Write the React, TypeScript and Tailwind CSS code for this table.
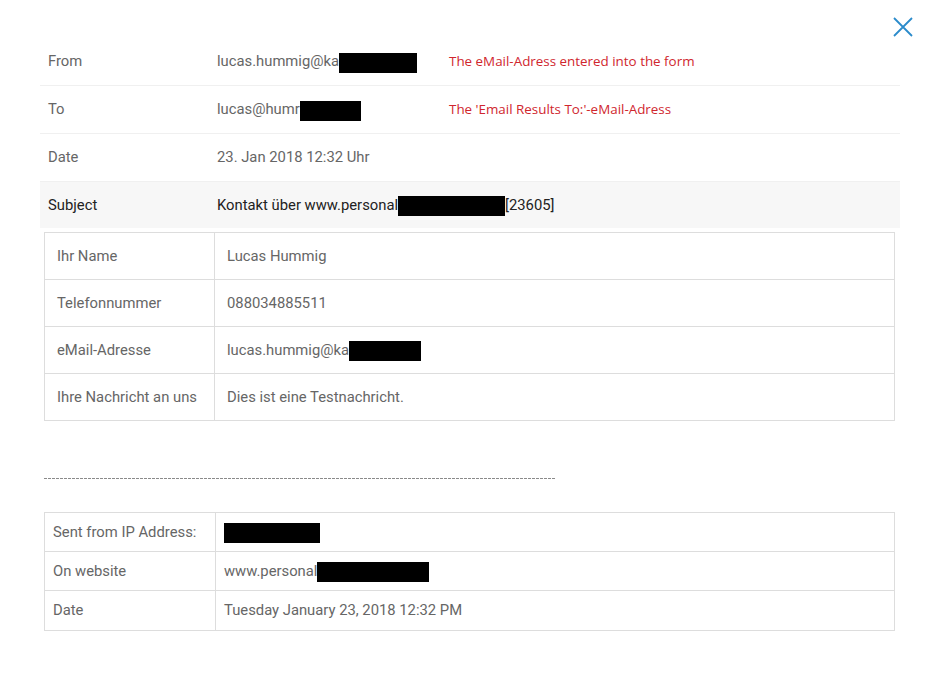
import React from 'react';

interface Row {
  label: string;
  value: string;
  redact?: number;
}

const headerRows = [
  { label: 'From', value: 'lucas.hummig@ka', redact: 78, note: 'The eMail-Adress entered into the form' },
  { label: 'To', value: 'lucas@humr', redact: 61, note: "The 'Email Results To:'-eMail-Adress" },
  { label: 'Date', value: '23. Jan 2018 12:32 Uhr' },
];

const formRows: Row[] = [
  { label: 'Ihr Name', value: 'Lucas Hummig' },
  { label: 'Telefonnummer', value: '088034885511' },
  { label: 'eMail-Adresse', value: 'lucas.hummig@ka', redact: 72 },
  { label: 'Ihre Nachricht an uns', value: 'Dies ist eine Testnachricht.' },
];

const metaRows: Row[] = [
  { label: 'Sent from IP Address:', value: '', redact: 96 },
  { label: 'On website', value: 'www.personal', redact: 112 },
  { label: 'Date', value: 'Tuesday January 23, 2018 12:32 PM' },
];

// black box used to hide personal data in the screenshot
const Redacted = ({ width }: { width: number }) => (
  <span className="inline-block h-[20px] bg-black align-middle" style={{ width }} />
);

export default function App() {
  return (
    <div className="relative min-h-[674px] w-[941px] bg-white font-['Roboto',sans-serif] text-[14.8px]">
      <button className="absolute right-[28px] top-[17px] text-[#2b8bcb]">
        <svg width="20" height="20" viewBox="0 0 20 20" fill="none" stroke="currentColor" strokeWidth="1.8">
          <path d="M1 1 L19 19 M19 1 L1 19" />
        </svg>
      </button>

      <div className="ml-[40px] w-[860px] pt-[38px]">
        {headerRows.map((r) => (
          <div key={r.label} className="flex h-[48px] items-center border-b border-[#f0f0f0] text-[#666]">
            <div className="w-[177px] pl-[8px]">{r.label}</div>
            <div className="w-[232px] whitespace-nowrap">
              {r.value}
              {r.redact && <Redacted width={r.redact} />}
            </div>
            {r.note && (
              <div className="font-['Open_Sans',sans-serif] text-[13.4px] text-[#d0262e]">{r.note}</div>
            )}
          </div>
        ))}
        <div className="flex h-[46px] items-center bg-[#f7f7f7] text-[#222]">
          <div className="w-[177px] pl-[8px]">Subject</div>
          <div className="whitespace-nowrap">
            Kontakt über www.personal
            <Redacted width={107} />
            [23605]
          </div>
        </div>
      </div>

      <div className="ml-[44px] mt-[4px] w-[851px] border border-b-0 border-[#ddd] text-[#666]">
        {formRows.map((r) => (
          <div key={r.label} className="flex h-[47px] items-center border-b border-[#ddd]">
            <div className="flex h-full w-[170px] items-center border-r border-[#ddd] pl-[12px]">{r.label}</div>
            <div className="pl-[12px] whitespace-nowrap">
              {r.value}
              {r.redact && <Redacted width={r.redact} />}
            </div>
          </div>
        ))}
      </div>

      <div className="ml-[44px] mt-[57px] h-[1px] w-[512px] bg-[repeating-linear-gradient(90deg,#8a8a8a_0_3px,transparent_3px_4px)]" />

      <div className="mb-[43px] ml-[44px] mt-[33px] w-[851px] border border-b-0 border-[#ddd] text-[#666]">
        {metaRows.map((r, i) => (
          <div
            key={r.label}
            className={`flex items-center border-b border-[#ddd] ${i === 2 ? 'h-[40px]' : 'h-[39px]'}`}
          >
            <div className="flex h-full w-[171px] items-center border-r border-[#ddd] pl-[8px]">{r.label}</div>
            <div className="pl-[8px] whitespace-nowrap">
              {r.value}
              {r.redact && <Redacted width={r.redact} />}
            </div>
          </div>
        ))}
      </div>
    </div>
  );
}
